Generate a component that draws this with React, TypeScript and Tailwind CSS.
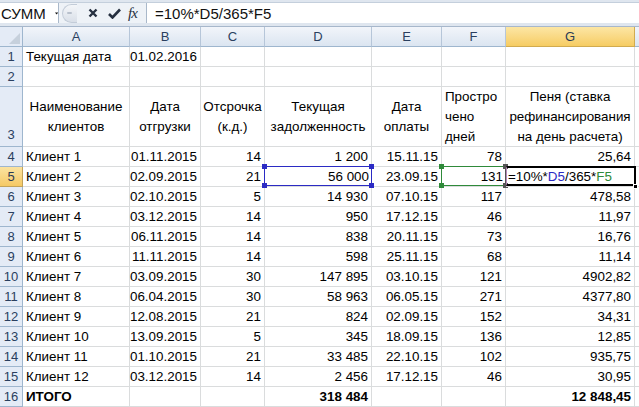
import React from "react";

type Cell = { v: string; a?: "l" | "r" | "c"; b?: boolean };

const widths = ["w-[107px]", "w-[71px]", "w-[64px]", "w-[107px]", "w-[70px]", "w-[64px]", "w-[129px]"];
const letters = ["A", "B", "C", "D", "E", "F", "G"];

const data: string[][] = [
  ["Клиент 1", "01.11.2015", "14", "1 200", "15.11.15", "78", "25,64"],
  ["Клиент 2", "02.09.2015", "21", "56 000", "23.09.15", "131", ""],
  ["Клиент 3", "02.10.2015", "5", "14 930", "07.10.15", "117", "478,58"],
  ["Клиент 4", "03.12.2015", "14", "950", "17.12.15", "46", "11,97"],
  ["Клиент 5", "06.11.2015", "14", "838", "20.11.15", "73", "16,76"],
  ["Клиент 6", "11.11.2015", "14", "598", "25.11.15", "68", "11,14"],
  ["Клиент 7", "03.09.2015", "30", "147 895", "03.10.15", "121", "4902,82"],
  ["Клиент 8", "06.04.2015", "30", "58 963", "06.05.15", "271", "4377,80"],
  ["Клиент 9", "12.08.2015", "21", "824", "02.09.15", "152", "34,31"],
  ["Клиент 10", "13.09.2015", "5", "345", "18.09.15", "136", "12,85"],
  ["Клиент 11", "01.10.2015", "21", "33 485", "22.10.15", "102", "935,75"],
  ["Клиент 12", "03.12.2015", "14", "2 456", "17.12.15", "46", "30,95"],
];

const RowNum = ({ n, active, bottom }: { n: number; active?: boolean; bottom?: boolean }) => (
  <div
    className={`w-[23px] shrink-0 flex justify-center border-r border-b text-[13px] ${bottom ? "items-end pb-[1px]" : "items-center"} ${
      active
        ? "bg-linear-to-b from-[#fbe3a0] to-[#f5c964] border-[#c2a35a] text-[#2a3b55]"
        : "bg-[#e4ebf6] border-[#9eb6ce] text-[#2a3f5f]"
    }`}
  >
    {n}
  </div>
);

const Handle = ({ pos, color }: { pos: string; color: string }) => (
  <div className={`absolute w-[5px] h-[5px] ${pos} ${color}`} />
);

const Row = ({ n, cells, active }: { n: number; cells: Cell[]; active?: boolean }) => (
  <div className="flex h-[20px]">
    <RowNum n={n} active={active} />
    {cells.map((c, i) => (
      <div
        key={i}
        className={`${widths[i]} shrink-0 border-r border-b border-[#dadcdd] px-[3px] flex items-center whitespace-nowrap overflow-visible ${
          c.a === "r" ? "justify-end" : c.a === "c" ? "justify-center" : "justify-start"
        } ${c.b ? "font-bold" : ""}`}
      >
        {c.v}
      </div>
    ))}
    <div className="flex-1 border-b border-[#dadcdd]" />
  </div>
);

export default function App() {
  return (
    <div className="w-[639px] h-[407px] overflow-hidden bg-white text-[13.4px] text-black font-['Liberation_Sans',Arial,sans-serif] leading-none">
      {/* formula bar */}
      <div className="h-[27px] bg-[#dfe6ef] border-b border-[#a7b7cb] pt-[2px]">
        <div className="flex h-[21px] bg-[#eef2f7] border-t border-[#c4cfdc]">
          <div className="w-[59px] bg-white border-r border-[#a9b8ca] flex items-center pl-[1px] text-[15px] text-[#111]">
            СУММ
            <svg className="ml-[9px]" width="8" height="5" viewBox="0 0 8 5">
              <path d="M0 0h8L4 5z" fill="#111" />
            </svg>
          </div>
          <div className="w-[87px] flex items-center pl-[3px]">
            <div className="w-[15px] h-[19px] rounded-l-full bg-linear-to-b from-[#f4f6f9] to-[#d9dfe8] border border-[#c3ccd8] border-r-0 flex items-center pl-[4px]">
              <div className="w-[5px] h-[2px] rounded bg-[#b8c0cc]" />
            </div>
            <svg className="ml-[11px]" width="10" height="10" viewBox="0 0 10 10">
              <path d="M1.5 1.5l7 7M8.5 1.5l-7 7" stroke="#263040" strokeWidth="2.4" />
            </svg>
            <svg className="ml-[10px]" width="13" height="11" viewBox="0 0 13 11">
              <path d="M1 6l3.5 3.5L12 1.5" stroke="#263040" strokeWidth="2.6" fill="none" />
            </svg>
            <span className="ml-[7px] italic text-[15px] text-[#263040] font-['Liberation_Serif',serif] tracking-[-1px]">
              fx
            </span>
          </div>
          <div className="flex-1 bg-white border-l border-[#a9b8ca] flex items-center pl-[8px] text-[15px] text-[#111]">
            =10%*D5/365*F5
          </div>
        </div>
      </div>

      {/* column headers */}
      <div className="flex h-[20px] text-[13px]">
        <div className="w-[23px] shrink-0 bg-[#e4ebf6] border-r border-b border-[#9eb6ce] relative">
          <svg className="absolute right-[2px] bottom-[2px]" width="11" height="11" viewBox="0 0 11 11">
            <path d="M11 0v11H0z" fill="#c6d0dc" />
          </svg>
        </div>
        {letters.map((l, i) => (
          <div
            key={l}
            className={`${widths[i]} shrink-0 flex items-center justify-center border-r border-b ${
              l === "G"
                ? "bg-linear-to-b from-[#fce6a4] to-[#f6cc62] border-[#d1ab4f] text-[#2a3b55]"
                : "bg-linear-to-b from-[#f2f5fa] to-[#dbe5f1] border-[#b6c6d9] border-b-[#9eb6ce] text-[#2a3f5f]"
            }`}
          >
            {l}
          </div>
        ))}
        <div className="flex-1 bg-linear-to-b from-[#f2f5fa] to-[#dbe5f1] border-b border-[#9eb6ce]" />
      </div>

      <Row n={1} cells={[{ v: "Текущая дата" }, { v: "01.02.2016", a: "r" }, { v: "" }, { v: "" }, { v: "" }, { v: "" }, { v: "" }]} />
      <Row n={2} cells={[{ v: "" }, { v: "" }, { v: "" }, { v: "" }, { v: "" }, { v: "" }, { v: "" }]} />

      {/* row 3: multiline headers */}
      <div className="flex h-[60px] leading-[20px]">
        <RowNum n={3} bottom />
        {[
          ["Наименование", "клиентов"],
          ["Дата", "отгрузки"],
          ["Отсрочка", "(к.д.)"],
          ["Текущая", "задолженность"],
          ["Дата", "оплаты"],
          ["Простро", "чено", "дней"],
          ["Пеня (ставка", "рефинансирования", "на день расчета)"],
        ].map((lines, i) => (
          <div
            key={i}
            className={`${widths[i]} shrink-0 border-r border-b border-[#dadcdd] flex flex-col justify-center whitespace-nowrap ${
              i === 5 ? "items-start pl-[3px]" : "items-center"
            }`}
          >
            {lines.map((t) => (
              <span key={t}>{t}</span>
            ))}
          </div>
        ))}
        <div className="flex-1 border-b border-[#dadcdd]" />
      </div>

      {data.map((r, idx) => {
        const n = idx + 4;
        if (n === 5) {
          return (
            <div key={n} className="flex h-[20px]">
              <RowNum n={5} active />
              <div className={`${widths[0]} shrink-0 border-r border-b border-[#dadcdd] px-[3px] flex items-center`}>{r[0]}</div>
              <div className={`${widths[1]} shrink-0 border-r border-b border-[#dadcdd] px-[3px] flex items-center justify-end`}>{r[1]}</div>
              <div className={`${widths[2]} shrink-0 border-r border-b border-[#dadcdd] px-[3px] flex items-center justify-end`}>{r[2]}</div>
              <div className={`${widths[3]} shrink-0 relative border-b border-[#dadcdd] px-[3px] flex items-center justify-end`}>
                <div className="absolute -left-px -top-px right-0 bottom-0 border border-[#2b2bc4]" />
                <Handle pos="-left-[3px] -top-[3px]" color="bg-[#2b2bc4]" />
                <Handle pos="-right-[2px] -top-[3px]" color="bg-[#2b2bc4]" />
                <Handle pos="-left-[3px] -bottom-[2px]" color="bg-[#2b2bc4]" />
                <Handle pos="-right-[2px] -bottom-[2px]" color="bg-[#2b2bc4]" />
                <span className="relative">{r[3]}</span>
              </div>
              <div className={`${widths[4]} shrink-0 border-r border-b border-[#dadcdd] px-[3px] flex items-center justify-end`}>{r[4]}</div>
              <div className={`${widths[5]} shrink-0 relative border-b border-[#dadcdd] px-[3px] flex items-center justify-end`}>
                <div className="absolute -left-px -top-px right-0 bottom-0 border border-[#2f8a3a] border-r-[#555]" />
                <Handle pos="-left-[3px] -top-[3px]" color="bg-[#2f8a3a]" />
                <Handle pos="-left-[3px] -bottom-[2px]" color="bg-[#2f8a3a]" />
                <Handle pos="-right-[2px] -top-[3px] w-[3px]" color="bg-[#555]" />
                <Handle pos="-right-[2px] -bottom-[2px] w-[3px]" color="bg-[#555]" />
                <span className="relative">{r[5]}</span>
              </div>
              <div className={`${widths[6]} shrink-0 relative border-b border-[#dadcdd] pl-[2px] flex items-center`}>
                <div className="absolute left-0 -top-px -right-[1px] bottom-0 border-2 border-black border-l border-l-[#b88ab8]" />
                <div className="absolute -right-[3px] -bottom-[3px] w-[5px] h-[5px] bg-black border border-white" />
                <span className="relative">
                  =10%*<span className="text-[#2b2bc4]">D5</span>/365*<span className="text-[#2f8a3a]">F5</span>
                </span>
              </div>
              <div className="flex-1 border-b border-[#dadcdd]" />
            </div>
          );
        }
        return (
          <Row
            key={n}
            n={n}
            cells={[
              { v: r[0] },
              { v: r[1], a: "r" },
              { v: r[2], a: "r" },
              { v: r[3], a: "r" },
              { v: r[4], a: "r" },
              { v: r[5], a: "r" },
              { v: r[6], a: "r" },
            ]}
          />
        );
      })}

      <Row
        n={16}
        cells={[
          { v: "ИТОГО", b: true },
          { v: "" },
          { v: "" },
          { v: "318 484", a: "r", b: true },
          { v: "" },
          { v: "" },
          { v: "12 848,45", a: "r", b: true },
        ]}
      />
    </div>
  );
}
